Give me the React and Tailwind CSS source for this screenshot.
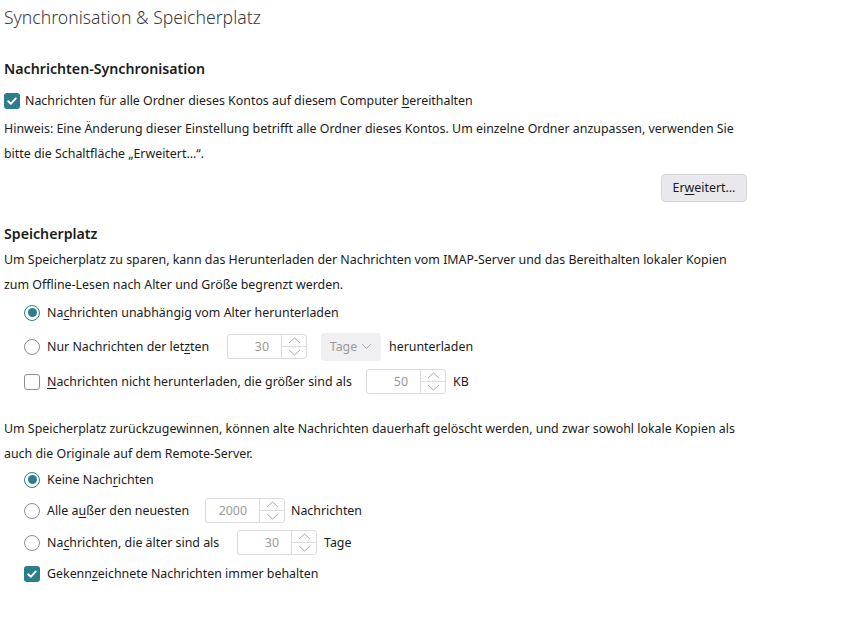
import React from "react";

const U = ({ children }) => <span className="underline underline-offset-2">{children}</span>;

function Check({ checked }) {
  return checked ? (
    <span className="flex h-[16px] w-[16px] shrink-0 items-center justify-center rounded-[3px] bg-[#2d7d8c]">
      <svg width="12" height="12" viewBox="0 0 12 12" fill="none">
        <path d="M2.2 6.3 4.8 8.8 9.8 3.4" stroke="white" strokeWidth="1.9" strokeLinecap="round" strokeLinejoin="round" />
      </svg>
    </span>
  ) : (
    <span className="h-[16px] w-[16px] shrink-0 rounded-[3px] border-[1.5px] border-[#8f8f9d] bg-white" />
  );
}

function Radio({ checked }) {
  return checked ? (
    <span className="flex h-[16px] w-[16px] shrink-0 items-center justify-center rounded-full border-[1.5px] border-[#2d7d8c] bg-white">
      <span className="h-[9px] w-[9px] rounded-full bg-[#2d7d8c]" />
    </span>
  ) : (
    <span className="h-[16px] w-[16px] shrink-0 rounded-full border-[1.5px] border-[#8f8f9d] bg-white" />
  );
}

function Spin({ value }) {
  return (
    <div className="flex h-[25px] w-[80px] shrink-0 rounded-[3px] border border-[#dcdcdc] bg-white">
      <div className="flex flex-1 items-center justify-end pr-[12px] text-[#9a9a9a]">{value}</div>
      <div className="flex w-[25px] flex-col border-l border-[#dcdcdc]">
        <div className="flex flex-1 items-center justify-center border-b border-[#dcdcdc]">
          <svg width="13" height="7" viewBox="0 0 13 7" fill="none"><path d="M1 6 6.5 1 12 6" stroke="#a8a8a8" strokeWidth="1" /></svg>
        </div>
        <div className="flex flex-1 items-center justify-center">
          <svg width="13" height="7" viewBox="0 0 13 7" fill="none"><path d="M1 1 6.5 6 12 1" stroke="#a8a8a8" strokeWidth="1" /></svg>
        </div>
      </div>
    </div>
  );
}

export default function App() {
  return (
    <div className="h-[632px] w-[857px] whitespace-nowrap bg-white text-[12.4px] leading-[25px] text-[#1b1b1b]" style={{ fontFamily: '"Noto Sans", "Open Sans", sans-serif' }}>
      <div className="pl-[4px]">
        <h1 className="pt-[4px] text-[17.6px] font-light leading-[26px] text-[#3a3a3a]">Synchronisation &amp; Speicherplatz</h1>

        <h2 className="mt-[28px] text-[14.2px] font-semibold leading-[22px]">Nachrichten-Synchronisation</h2>
        <div className="mt-[8px] flex items-center gap-[5px]">
          <Check checked />
          <span>Nachrichten für alle Ordner dieses Kontos auf diesem Computer <U>b</U>ereithalten</span>
        </div>
        <p className="mt-[3px]">
          Hinweis: Eine Änderung dieser Einstellung betrifft alle Ordner dieses Kontos. Um einzelne Ordner anzupassen, verwenden Sie
          <br />
          bitte die Schaltfläche „Erweitert…“.
        </p>
        <div className="mt-[8px] flex w-[743px] justify-end">
          <button className="h-[28px] w-[86px] rounded-[4px] border border-[#d4d4d4] bg-[#e9e9ed] text-[12.4px] leading-[26px]">Er<U>w</U>eitert…</button>
        </div>

        <h2 className="mt-[21px] text-[14.2px] font-semibold leading-[22px]">Speicherplatz</h2>
        <p className="mt-[2px]">
          Um Speicherplatz zu sparen, kann das Herunterladen der Nachrichten vom IMAP-Server und das Bereithalten lokaler Kopien
          <br />
          zum Offline-Lesen nach Alter und Größe begrenzt werden.
        </p>

        <div className="ml-[20px] mt-[1px] flex flex-col">
          <div className="flex h-[29px] items-center gap-[7px]">
            <Radio checked />
            <span>Na<U>c</U>hrichten unabhängig vom Alter herunterladen</span>
          </div>
          <div className="mt-[4px] flex h-[31px] items-center">
            <Radio />
            <span className="ml-[7px] w-[180px]">Nur Nachrichten der let<U>z</U>ten</span>
            <Spin value="30" />
            <div className="ml-[14px] flex h-[28px] w-[60px] items-center justify-center gap-[4px] rounded-[4px] bg-[#f0f0f2] text-[#9a9a9a]">
              Tage
              <svg width="11" height="7" viewBox="0 0 11 7" fill="none"><path d="M1 1 5.5 5.5 10 1" stroke="#a8a8a8" strokeWidth="1" /></svg>
            </div>
            <span className="ml-[8px]">herunterladen</span>
          </div>
          <div className="mt-[4px] flex h-[31px] items-center">
            <Check />
            <span className="ml-[7px] w-[319px]"><U>N</U>achrichten nicht herunterladen, die größer sind als</span>
            <Spin value="50" />
            <span className="ml-[7px]">KB</span>
          </div>
        </div>

        <p className="mt-[19px]">
          Um Speicherplatz zurückzugewinnen, können alte Nachrichten dauerhaft gelöscht werden, und zwar sowohl lokale Kopien als
          <br />
          auch die Originale auf dem Remote-Server.
        </p>
        <div className="ml-[20px] flex flex-col">
          <div className="flex h-[27px] items-center gap-[7px]">
            <Radio checked />
            <span>Keine Nach<U>r</U>ichten</span>
          </div>
          <div className="mt-[4px] flex h-[27px] items-center">
            <Radio />
            <span className="ml-[7px] w-[158px]">Alle a<U>u</U>ßer den neuesten</span>
            <Spin value="2000" />
            <span className="ml-[6px]">Nachrichten</span>
          </div>
          <div className="mt-[5px] flex h-[27px] items-center">
            <Radio />
            <span className="ml-[7px] w-[190px]">Na<U>c</U>hrichten, die älter sind als</span>
            <Spin value="30" />
            <span className="ml-[7px]">Tage</span>
          </div>
          <div className="mt-[4px] flex h-[27px] items-center gap-[7px]">
            <Check checked />
            <span>Gekenn<U>z</U>eichnete Nachrichten immer behalten</span>
          </div>
        </div>
      </div>
    </div>
  );
}
